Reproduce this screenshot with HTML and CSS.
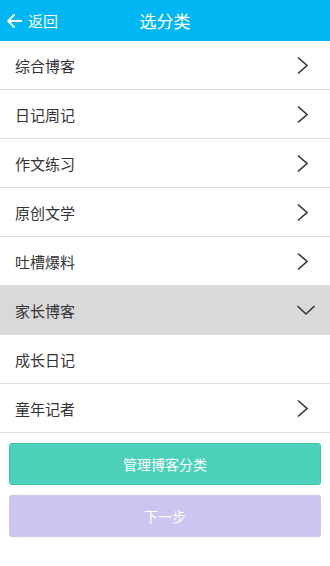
FILE: index.html
```html
<!DOCTYPE html>
<html lang="zh">
<head>
<meta charset="utf-8">
<link rel="stylesheet" href="styles.css">
</head>
<body>
<header class="topbar">
  <div class="back">
    <svg class="back-icon" width="15" height="14" viewBox="0 0 15 14"><path d="M7 1 L1.2 7 L7 13 M1.2 7 H14.5" fill="none" stroke="#fff" stroke-width="1.8" stroke-linecap="round" stroke-linejoin="round"/></svg>
    <span>返回</span>
  </div>
  <h1 class="title">选分类</h1>
</header>
<ul class="list">
  <li class="item"><span>综合博客</span><svg class="chev" width="14" height="19" viewBox="0 0 14 19"><path d="M2 1.5 L11 9.5 L2 17.5" fill="none" stroke="#333" stroke-width="1.6"/></svg></li>
  <li class="item"><span>日记周记</span><svg class="chev" width="14" height="19" viewBox="0 0 14 19"><path d="M2 1.5 L11 9.5 L2 17.5" fill="none" stroke="#333" stroke-width="1.6"/></svg></li>
  <li class="item"><span>作文练习</span><svg class="chev" width="14" height="19" viewBox="0 0 14 19"><path d="M2 1.5 L11 9.5 L2 17.5" fill="none" stroke="#333" stroke-width="1.6"/></svg></li>
  <li class="item"><span>原创文学</span><svg class="chev" width="14" height="19" viewBox="0 0 14 19"><path d="M2 1.5 L11 9.5 L2 17.5" fill="none" stroke="#333" stroke-width="1.6"/></svg></li>
  <li class="item"><span>吐槽爆料</span><svg class="chev" width="14" height="19" viewBox="0 0 14 19"><path d="M2 1.5 L11 9.5 L2 17.5" fill="none" stroke="#333" stroke-width="1.6"/></svg></li>
  <li class="item open"><span>家长博客</span><svg class="chev-down" width="20" height="12" viewBox="0 0 20 12"><path d="M1.5 2 L10 10 L18.5 2" fill="none" stroke="#333" stroke-width="1.6"/></svg></li>
  <li class="item"><span>成长日记</span></li>
  <li class="item"><span>童年记者</span><svg class="chev" width="14" height="19" viewBox="0 0 14 19"><path d="M2 1.5 L11 9.5 L2 17.5" fill="none" stroke="#333" stroke-width="1.6"/></svg></li>
</ul>
<div class="actions">
  <button class="btn btn-manage">管理博客分类</button>
  <button class="btn btn-next">下一步</button>
</div>
</body>
</html>
```
FILE: styles.css
```css
* { box-sizing: border-box; }
html, body {
  margin: 0;
  padding: 0;
  background: #fff;
  font-family: "Noto Sans CJK SC", "Noto Sans", sans-serif;
}
.topbar {
  height: 41px;
  background: #00b6f3;
  display: flex;
  align-items: center;
  position: relative;
  color: #fff;
}
.back {
  display: flex;
  align-items: center;
  padding-left: 7px;
  gap: 6px;
  font-size: 15px;
  line-height: 1;
}
.back-icon { display: block; }
.title {
  position: absolute;
  left: 0;
  right: 0;
  top: 0;
  margin: 0;
  text-align: center;
  font-size: 17px;
  font-weight: normal;
  line-height: 41px;
  pointer-events: none;
}
.list {
  list-style: none;
  margin: 0;
  padding: 0;
}
.item {
  height: 49px;
  border-bottom: 1px solid #dedede;
  display: flex;
  align-items: center;
  justify-content: space-between;
  padding: 0 18px 0 15px;
  font-size: 15px;
  color: #333;
}
.item.open {
  background: #d9d9d9;
  padding-right: 14px;
}
.chev { display: block; margin-right: 2px; }
.chev-down { display: block; }
.actions {
  padding: 10px 9px;
  display: flex;
  flex-direction: column;
  gap: 10px;
}
.btn {
  height: 42px;
  border: none;
  border-radius: 3px;
  color: #fff;
  font-family: "Noto Sans CJK SC", "Noto Sans", sans-serif;
  font-size: 14px;
  width: 100%;
}
.btn-manage {
  background: #4ed1bb;
  border: 1px solid #3fc1aa;
}
.btn-next {
  background: #cbc5f1;
}
```
